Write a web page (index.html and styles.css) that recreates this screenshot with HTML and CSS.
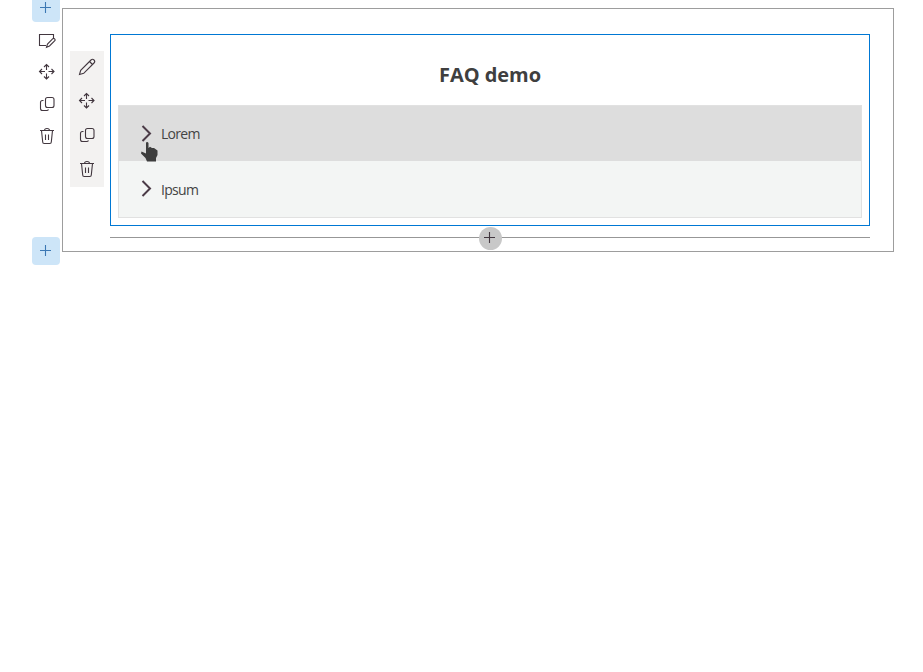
FILE: index.html
```
<!DOCTYPE html>
<html lang="en">
<head>
<meta charset="utf-8">
<title>FAQ demo</title>
<link rel="stylesheet" href="styles.css">
</head>
<body>
<svg class="symbols" aria-hidden="true">
  <symbol id="plus" viewBox="0 0 18 18"><path d="M3 9.5H14M8.5 4V15"/></symbol>
  <symbol id="edit-section" viewBox="0 0 18 18"><path d="M8 13.5H1.5V2.5H15.5V6M8.5 15.2l1-3.2 5.1-5.1a1.3 1.3 0 0 1 2 2L11.5 14z"/></symbol>
  <symbol id="move" viewBox="0 0 18 18"><path d="M8.5 1.5V7M8.5 10.500V16M1.500 8.500H7M10.500 8.500H16M6 4L8.500 1.500L11 4M6 13.500L8.500 16L11 13.500M4 6L1.500 8.500L4 11M13.500 6L16 8.500L13.500 11"/></symbol>
  <symbol id="copy" viewBox="0 0 18 18"><rect x="7.500" y="2.500" width="8.500" height="10" rx="2"/><path d="M5.500 5.500H4.500a2 2 0 0 0-2 2v6a2 2 0 0 0 2 2H8.500a2 2 0 0 0 2-1"/></symbol>
  <symbol id="trash" viewBox="0 0 18 18"><path d="M2 3.500H16M6.500 3.500a2.500 2 0 0 1 5 0M3.500 3.500L4.700 15a1.500 1.500 0 0 0 1.500 1.500H11.800a1.500 1.500 0 0 0 1.500-1.500L14.500 3.500M7.500 7.500V13M10.500 7.500V13"/></symbol>
  <symbol id="pencil" viewBox="0 0 18 18"><path d="M1.500 16.500L2.700 12.300L13 2a2 2 0 0 1 3 3L5.700 15.300zM11.500 3.500L14.500 6.500"/></symbol>
</svg>
<main class="canvas">
  <nav class="rail">
    <button class="add"><svg class="icon"><use href="#plus"/></svg></button>
    <div class="rail-tools">
      <svg class="icon"><use href="#edit-section"/></svg>
      <svg class="icon"><use href="#move"/></svg>
      <svg class="icon"><use href="#copy"/></svg>
      <svg class="icon"><use href="#trash"/></svg>
    </div>
    <button class="add"><svg class="icon"><use href="#plus"/></svg></button>
  </nav>
  <section class="section">
    <div class="toolbar">
      <svg class="icon"><use href="#pencil"/></svg>
      <svg class="icon"><use href="#move"/></svg>
      <svg class="icon"><use href="#copy"/></svg>
      <svg class="icon"><use href="#trash"/></svg>
    </div>
    <div class="column">
      <article class="webpart">
        <h1>FAQ demo</h1>
        <div class="accordion">
          <div class="item active"><svg class="chevron" viewBox="0 0 12 18"><path d="M2.500 1L10 8.500L2.500 16"/></svg><span>Lorem</span>
            <svg class="pointer" viewBox="0 0 18 22"><path d="M6 1.500Q7.500 .5 8.500 2V7L10 5.800L12 7L14 7L17.500 9.500V14L16 17V20.500H7L5.500 17L1 12.500L1.500 10.500L6 12.500z"/></svg>
          </div>
          <div class="item"><svg class="chevron" viewBox="0 0 12 18"><path d="M2.500 1L10 8.500L2.500 16"/></svg><span>Ipsum</span></div>
        </div>
      </article>
      <div class="divider"><button class="insert"><svg class="icon"><use href="#plus"/></svg></button></div>
    </div>
  </section>
</main>
</body>
</html>
```
FILE: styles.css
```
* { box-sizing: border-box; }
body { margin: 0; background: #fff; color: #323130; font-family: "Open Sans", "Noto Sans", sans-serif; overflow: hidden; }
button { border: 0; padding: 0; font: inherit; }
.symbols { position: absolute; width: 0; height: 0; }
.canvas { display: flex; height: 672px; padding-left: 32px; align-items: flex-start; overflow: hidden; }
.icon { display: block; width: 18px; height: 18px; fill: none; stroke: #42373f; stroke-width: 1.1; }
.rail { width: 28px; margin: -6px 2px 0 0; }
.add { display: block; width: 28px; height: 28px; padding: 4px 5px 6px; border-radius: 4px; background: #cde5f8; }
.add .icon { stroke: #3c78b4; }
.rail-tools { display: flex; flex-direction: column; gap: 14px; height: 215px; padding: 10px 0 0 6px; }
.rail-tools .icon:nth-child(2) { margin-top: -1px; }
.section { display: flex; width: 832px; height: 244px; margin-top: 8px; padding: 25px 23px 0 7px; border: 1px solid #9d9d9d; }
.toolbar { display: flex; flex-direction: column; gap: 16px; width: 34px; height: 136px; margin: 17px 6px 0 0; padding: 7px 8px; background: #f3f2f1; }
.column { width: 760px; }
.webpart { height: 192px; padding: 0 7px; border: 1px solid #0078d4; }
h1 { margin: 0; height: 70px; padding-top: 26px; font-size: 20px; line-height: 28px; font-weight: 700; color: #3f3f3f; text-align: center; letter-spacing: -.05px; }
.accordion { height: 113px; border: 1px solid #e1e1e1; background: #f3f5f4; }
.item { position: relative; display: flex; align-items: center; height: 56px; padding-left: 21px; font-size: 14px; letter-spacing: -.7px; color: #444; }
.item span { padding-top: 1px; }
.item.active { height: 55px; background: #ddd; }
.item.active span { padding-top: 0; }
.chevron { width: 12px; height: 18px; margin-right: 9px; fill: none; stroke: #4b3b47; stroke-width: 2; }
.pointer { position: absolute; left: 21px; top: 35px; width: 18px; height: 22px; fill: #3d3d3d; z-index: 1; }
.divider { display: flex; justify-content: center; height: 1px; margin-top: 11px; background: #979797; align-items: center; }
.insert { flex: none; width: 23px; height: 23px; margin: 1px 0 0; padding: 1px 3px 4px 2px; border-radius: 50%; background: #c8c8c8; }
```
